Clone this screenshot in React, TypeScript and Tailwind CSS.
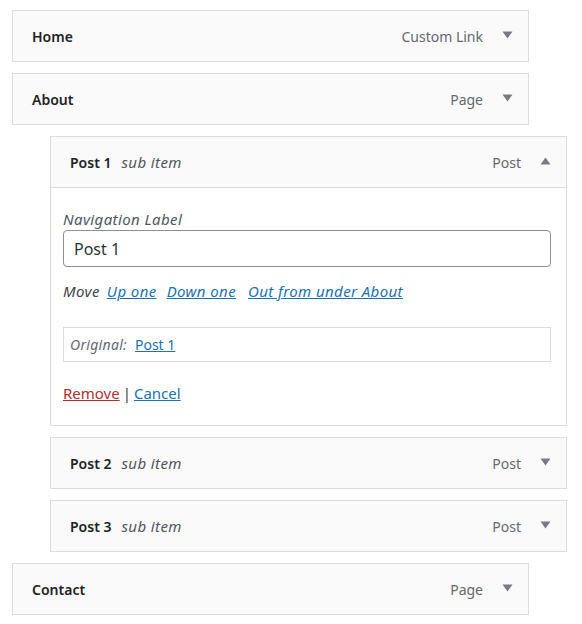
import React from 'react';

type Item = {
  title: string;
  type: string;
  sub?: boolean;
  open?: boolean;
};

const items: Item[] = [
  { title: 'Home', type: 'Custom Link' },
  { title: 'About', type: 'Page' },
  { title: 'Post 1', type: 'Post', sub: true, open: true },
  { title: 'Post 2', type: 'Post', sub: true },
  { title: 'Post 3', type: 'Post', sub: true },
  { title: 'Contact', type: 'Page' },
];

const Arrow = ({ up }: { up?: boolean }) => (
  <svg width="11" height="8" viewBox="0 0 11 8" className="shrink-0">
    {up ? <polygon points="0.5,7.5 10.5,7.5 5.5,0.5" fill="#787c82" /> : <polygon points="0.5,0.5 10.5,0.5 5.5,7.5" fill="#787c82" />}
  </svg>
);

function Header({ item }: { item: Item }) {
  return (
    <div className="flex h-[50px] items-center bg-[#fafafa] pl-[19px] pr-[15px]">
      <span className="font-semibold text-[#1d2327]">{item.title}</span>
      {item.sub && <span className="ml-[10px] text-[15px] italic tracking-[0.4px] text-[#50575e]">sub item</span>}
      <span className="ml-auto text-[#646970]">{item.type}</span>
      <span className="ml-[19px] -mt-[3px] flex">
        <Arrow up={item.open} />
      </span>
    </div>
  );
}

function Settings() {
  return (
    <div className="border-t border-[#dcdcde] bg-white pl-[12px] pr-[15px] pt-[21px] pb-[22px]">
      <div className="text-[15px] leading-5 italic tracking-[0.4px] text-[#50575e]">Navigation Label</div>
      <div className="mt-[1px] flex h-[37px] items-center rounded-[4px] border border-[#8c8f94] px-[10px] text-[16px] text-[#2c3338]">
        Post 1
      </div>
      <div className="mt-[14px] flex text-[15px] leading-5 italic tracking-[0.4px]">
        <span className="text-[#3c434a]">Move</span>
        <a href="#" className="ml-[7px] text-[#2271b1] underline">Up one</a>
        <a href="#" className="ml-[10px] text-[#2271b1] underline">Down one</a>
        <a href="#" className="ml-[12px] text-[#2271b1] underline">Out from under About</a>
      </div>
      <div className="mt-[26px] flex h-[35px] items-center border border-[#dcdcde] px-[6px] text-[#646970]">
        <span className="italic tracking-[0.3px]">Original:</span>
        <a href="#" className="ml-[8px] text-[#2271b1] underline">Post 1</a>
      </div>
      <div className="mt-[21px] text-[15px] leading-5">
        <a href="#" className="text-[#b32d2e] underline">Remove</a>
        <span className="mx-[3px] text-[#3c434a]">|</span>
        <a href="#" className="text-[#2271b1] underline">Cancel</a>
      </div>
    </div>
  );
}

export default function App() {
  return (
    <div
      className="flex flex-col gap-[11px] bg-white pl-[12px] pt-[10px] text-[14px]"
      style={{ fontFamily: '"Noto Sans", "Open Sans", sans-serif' }}
    >
      {items.map((item) => (
        <div
          key={item.title}
          className={`w-[517px] border border-[#dcdcde] ${item.sub ? 'ml-[38px]' : ''}`}
        >
          <Header item={item} />
          {item.open && <Settings />}
        </div>
      ))}
    </div>
  );
}
